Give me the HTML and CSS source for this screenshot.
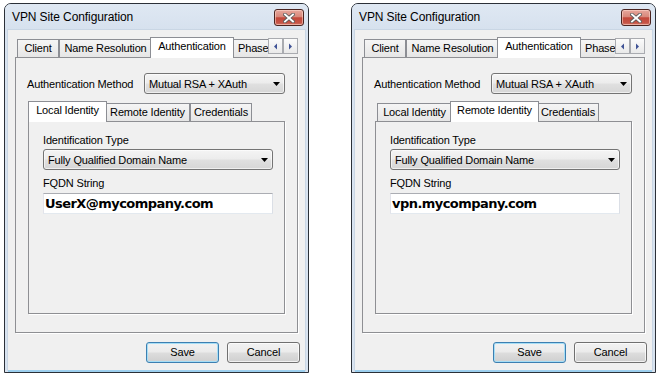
FILE: index.html
```html
<!DOCTYPE html>
<html>
<head>
<meta charset="utf-8">
<title>VPN Site Configuration</title>
<link rel="stylesheet" href="styles.css">
</head>
<body>
<div class="desk">

  <div class="window">
    <div class="titlebar">
      <span class="title">VPN Site Configuration</span>
      <div class="close">
        <svg width="12" height="10" viewBox="0 0 12 10"><path d="M2 1.5 L10 8.5 M10 1.5 L2 8.5" stroke="#5b5b5b" stroke-width="3.6" stroke-linecap="square"/><path d="M2 1.5 L10 8.5 M10 1.5 L2 8.5" stroke="#ffffff" stroke-width="1.9" stroke-linecap="square"/></svg>
      </div>
    </div>
    <div class="client">
      <div class="tabstrip main">
        <div class="tabs-view">
          <div class="tab t-client">Client</div>
          <div class="tab t-nr">Name Resolution</div>
          <div class="tab t-auth active">Authentication</div>
          <div class="tab t-phase">Phase 1</div>
        </div>
        <div class="scroller">
          <span class="sbtn"><svg width="5" height="7" viewBox="0 0 5 7"><path d="M4 0.5 L1 3.5 L4 6.5 Z" fill="#3f5296"/></svg></span>
          <span class="sbtn"><svg width="5" height="7" viewBox="0 0 5 7"><path d="M1 0.5 L4 3.5 L1 6.5 Z" fill="#3f5296"/></svg></span>
        </div>
      </div>
      <div class="panel outer">
        <div class="method-row">
          <span class="method-label">Authentication Method</span>
          <div class="combo method"><span>Mutual RSA + XAuth</span><svg class="caret" width="7" height="4" viewBox="0 0 7 4"><path d="M0 0 H7 L3.5 4 Z" fill="#000"/></svg></div>
        </div>
        <div class="identity">
          <div class="tabstrip sub">
            <div class="tab t-local active">Local Identity</div>
            <div class="tab t-remote">Remote Identity</div>
            <div class="tab t-cred">Credentials</div>
          </div>
          <div class="panel inner">
            <div class="field-label">Identification Type</div>
            <div class="combo wide"><span>Fully Qualified Domain Name</span><svg class="caret" width="7" height="4" viewBox="0 0 7 4"><path d="M0 0 H7 L3.5 4 Z" fill="#000"/></svg></div>
            <div class="field-label second">FQDN String</div>
            <div class="textbox">UserX@mycompany.com</div>
          </div>
        </div>
      </div>
      <div class="actions">
        <div class="btn default">Save</div>
        <div class="btn">Cancel</div>
      </div>
    </div>
  </div>

  <div class="window">
    <div class="titlebar">
      <span class="title">VPN Site Configuration</span>
      <div class="close">
        <svg width="12" height="10" viewBox="0 0 12 10"><path d="M2 1.5 L10 8.5 M10 1.5 L2 8.5" stroke="#5b5b5b" stroke-width="3.6" stroke-linecap="square"/><path d="M2 1.5 L10 8.5 M10 1.5 L2 8.5" stroke="#ffffff" stroke-width="1.9" stroke-linecap="square"/></svg>
      </div>
    </div>
    <div class="client">
      <div class="tabstrip main">
        <div class="tabs-view">
          <div class="tab t-client">Client</div>
          <div class="tab t-nr">Name Resolution</div>
          <div class="tab t-auth active">Authentication</div>
          <div class="tab t-phase">Phase 1</div>
        </div>
        <div class="scroller">
          <span class="sbtn"><svg width="5" height="7" viewBox="0 0 5 7"><path d="M4 0.5 L1 3.5 L4 6.5 Z" fill="#3f5296"/></svg></span>
          <span class="sbtn"><svg width="5" height="7" viewBox="0 0 5 7"><path d="M1 0.5 L4 3.5 L1 6.5 Z" fill="#3f5296"/></svg></span>
        </div>
      </div>
      <div class="panel outer">
        <div class="method-row">
          <span class="method-label">Authentication Method</span>
          <div class="combo method"><span>Mutual RSA + XAuth</span><svg class="caret" width="7" height="4" viewBox="0 0 7 4"><path d="M0 0 H7 L3.5 4 Z" fill="#000"/></svg></div>
        </div>
        <div class="identity">
          <div class="tabstrip sub">
            <div class="tab t-local">Local Identity</div>
            <div class="tab t-remote active">Remote Identity</div>
            <div class="tab t-cred">Credentials</div>
          </div>
          <div class="panel inner">
            <div class="field-label">Identification Type</div>
            <div class="combo wide"><span>Fully Qualified Domain Name</span><svg class="caret" width="7" height="4" viewBox="0 0 7 4"><path d="M0 0 H7 L3.5 4 Z" fill="#000"/></svg></div>
            <div class="field-label second">FQDN String</div>
            <div class="textbox">vpn.mycompany.com</div>
          </div>
        </div>
      </div>
      <div class="actions">
        <div class="btn default">Save</div>
        <div class="btn">Cancel</div>
      </div>
    </div>
  </div>

</div>
</body>
</html>
```

FILE: styles.css
```css
* { box-sizing: border-box; }
html, body { margin: 0; padding: 0; background: #ffffff; }
body {
  font-family: "Liberation Sans", Arial, sans-serif;
  font-size: 11px;
  letter-spacing: -0.15px;
  color: #000;
}

.desk {
  display: flex;
  gap: 42px;
  padding: 3px 0 0 4px;
}

.window {
  width: 305px;
  height: 370px;
  border: 1px solid #2b3038;
  border-radius: 7px 7px 0 0;
  background: #d8e3f0;
  display: flex;
  flex-direction: column;
  padding-bottom: 2px;
}

.titlebar {
  height: 26px;
  display: flex;
  justify-content: space-between;
  align-items: flex-start;
  padding: 0 4px 0 7px;
  border-radius: 6px 6px 0 0;
  background: linear-gradient(#dfe8f3, #d6e1ee);
  flex: none;
}
.title {
  font-size: 12px;
  letter-spacing: -0.1px;
  line-height: 26px;
  color: #000;
}
.close {
  margin-top: 5px;
  width: 30px;
  height: 17px;
  border: 1px solid #4a2420;
  border-radius: 3px;
  background: linear-gradient(#e7a79c 0%, #d8887b 45%, #c3473a 52%, #c65547 85%, #d47a6c 100%);
  box-shadow: inset 0 0 0 1px rgba(255, 220, 210, 0.55);
  display: flex;
  align-items: center;
  justify-content: center;
}

.client {
  flex: 1;
  margin: 0 3px;
  background: #f0f0f0;
  box-shadow: 0 2px 0 #9dcfee, 0 0 0 1px #c9d6e4;
  padding: 7px 7px 0 7px;
  display: flex;
  flex-direction: column;
}

/* tabs */
.tabstrip {
  display: flex;
  align-items: flex-end;
  height: 21px;
  margin-bottom: -1px;
  padding-left: 2px;
  position: relative;
  z-index: 1;
  flex: none;
}
.tabs-view {
  display: flex;
  align-items: flex-end;
  width: 251px;
  height: 21px;
  overflow: hidden;
}
.tab {
  flex: none;
  height: 18px;
  margin-bottom: 1px;
  border: 1px solid #8c8e94;
  border-bottom: none;
  background: linear-gradient(#f5f5f5, #e6e6e6);
  line-height: 17px;
  text-align: center;
  white-space: nowrap;
  overflow: hidden;
}
.tab.active {
  height: 21px;
  margin: 0 -2px;
  background: #ffffff;
  line-height: 17px;
  position: relative;
  z-index: 2;
}
.t-client { width: 42px; }
.t-nr { width: 93px; }
.t-auth { width: 84px; }
.t-phase { width: 60px; text-align: left; padding-left: 5px; }
.t-local { width: 75px; }
.t-local.active { width: 79px; }
.t-remote { width: 85px; }
.t-remote.active { width: 89px; }
.t-cred { width: 62px; }

.scroller {
  align-self: flex-start;
  margin-top: 1px;
  display: flex;
}
.sbtn {
  width: 15px;
  height: 16px;
  border: 1px solid #a9abb0;
  background: linear-gradient(#fbfbfb, #e9e9e9);
  display: flex;
  align-items: center;
  justify-content: center;
}

.panel {
  border: 1px solid #8e8f93;
  background: #f0f0f0;
  box-shadow: 1px 1px 0 #ffffff;
}
.panel.outer {
  height: 276px;
  padding: 15px 12px 0 11px;
  flex: none;
}

.method-row {
  display: flex;
  align-items: center;
  height: 21px;
}
.method-label { width: 117px; flex: none; }

.combo {
  height: 21px;
  border: 1px solid #747474;
  border-radius: 3px;
  background: linear-gradient(#f4f4f4 0%, #ececec 48%, #e0e0e0 52%, #d6d6d6 100%);
  box-shadow: inset 0 0 0 1px rgba(255, 255, 255, 0.6);
  display: flex;
  align-items: center;
  justify-content: space-between;
  padding: 0 4px 0 4px;
  white-space: nowrap;
}
.combo.method { width: 143px; }
.combo.wide { width: 230px; margin-top: 2px; }
.caret { flex: none; }

.identity {
  margin: 7px 0 0 1px;
  width: 257px;
}

.panel.inner {
  height: 193px;
  padding: 12px 0 0 14px;
}
.field-label { line-height: 13px; }
.field-label.second { margin-top: 7px; }

.textbox {
  width: 230px;
  height: 21px;
  margin-top: 3px;
  background: #ffffff;
  border: 1px solid;
  border-color: #abadb3 #dbdfe6 #e3e9ef #e2e3ea;
  padding-left: 1px;
  font-family: "DejaVu Sans", Verdana, sans-serif;
  font-weight: bold;
  font-size: 13px;
  letter-spacing: -0.55px;
  line-height: 19px;
  white-space: nowrap;
}

.actions {
  display: flex;
  justify-content: flex-end;
  gap: 8px;
  margin-top: 9px;
  margin-right: -2px;
}
.btn {
  width: 73px;
  height: 21px;
  border: 1px solid #707070;
  border-radius: 3px;
  background: linear-gradient(#f2f2f2 0%, #ebebeb 48%, #dddddd 52%, #cfcfcf 100%);
  box-shadow: inset 0 0 0 1px rgba(255, 255, 255, 0.7);
  text-align: center;
  line-height: 19px;
}
.btn.default {
  border-color: #3c7fb1;
  box-shadow: inset 0 0 0 1px #a6def6;
}
```
